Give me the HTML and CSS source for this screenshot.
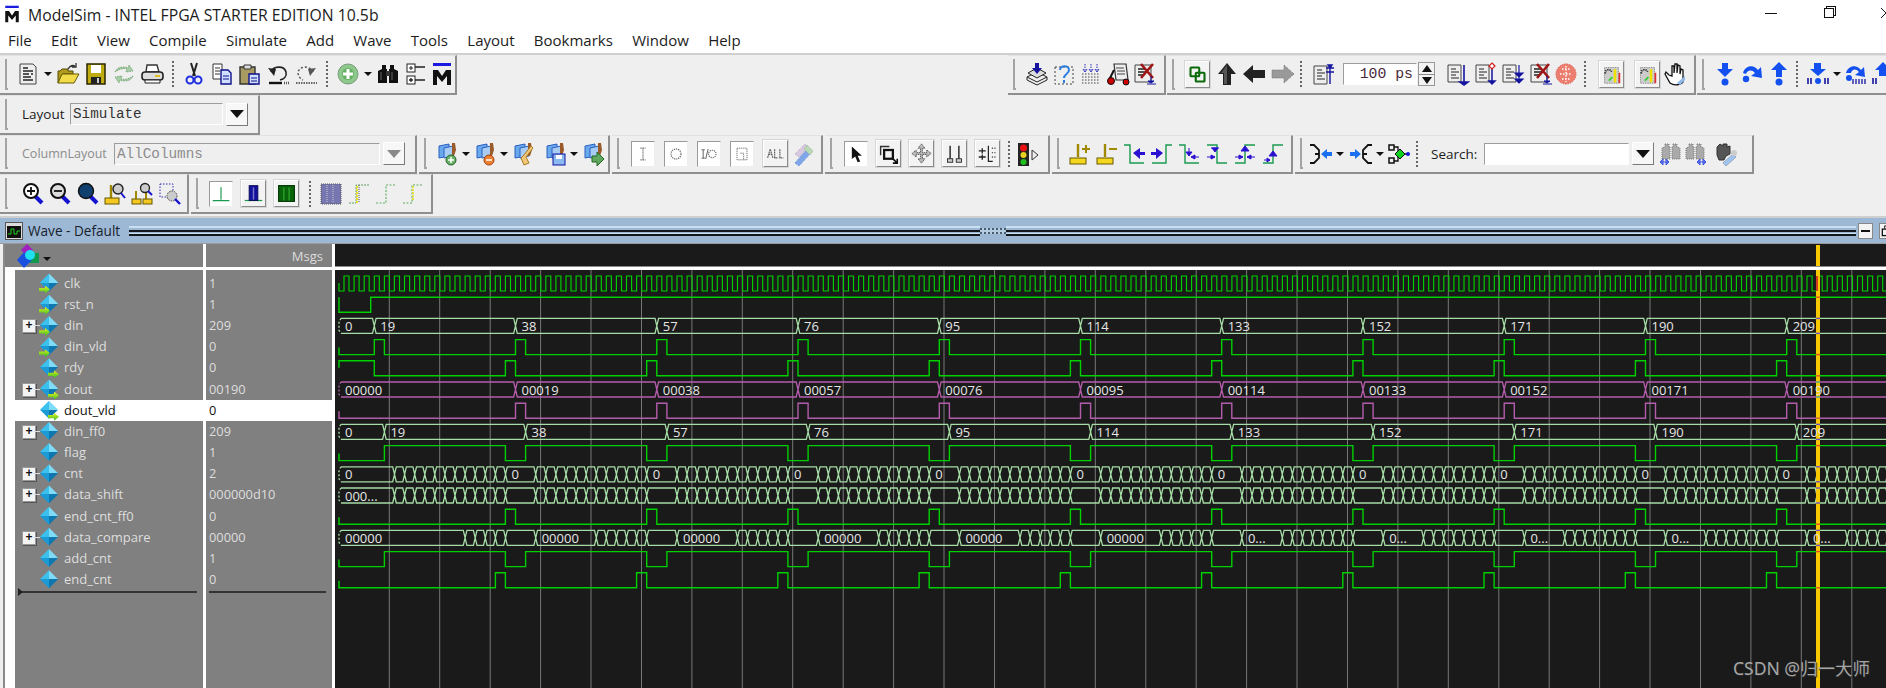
FILE: index.html
```html
<!DOCTYPE html>
<html lang="en">
<head>
<meta charset="utf-8">
<title>ModelSim - INTEL FPGA STARTER EDITION 10.5b</title>
<link rel="stylesheet" href="styles.css">
</head>
<body>
<svg class="defs" aria-hidden="true">
<symbol id="mlogo" viewBox="0 0 24 24"><path d="M3 1h18v3H3z" fill="#1a1ae0"/><path d="M3 23V8h5l4 6 4-6h5v15h-4V14l-5 6-5-6v9z" fill="#111"/></symbol>
<symbol id="doc" viewBox="0 0 24 24"><path d="M4 2h13l3 3v17H4z" fill="#eee" stroke="#444"/><path d="M7 6h5M7 9h10M7 12h6M15 12h2M7 15h8M7 18h10" stroke="#222" stroke-width="1.3"/></symbol>
<symbol id="open" viewBox="0 0 24 24"><path d="M2 21V9h2l2-2h6v2h5v3H7z" fill="#b09a20" stroke="#554c00"/><path d="M6 12h17l-5 9H2z" fill="#f2dc4a" stroke="#665a00"/><path d="M12 7c2-3 5-4 7-3M20 1v4h-4" stroke="#333" fill="none" stroke-width="1.3"/></symbol>
<symbol id="save" viewBox="0 0 24 24"><path d="M3 2h18v20H3z" fill="#c0ac10" stroke="#2a2600" stroke-width="1.5"/><rect x="7" y="3" width="10" height="8" fill="#fff"/><rect x="7" y="15" width="10" height="7" fill="#222"/><rect x="13" y="16" width="2" height="5" fill="#ccc"/></symbol>
<symbol id="comp" viewBox="0 0 24 24"><path d="M3 10c2-5 8-6 13-4l1-3 4 6-7 1 1-3c-4-1-8 0-12 3zM21 14c-2 5-8 6-13 4l-1 3-4-6 7-1-1 3c4 1 8 0 12-3z" fill="#a8cda8" stroke="#7aa87a" stroke-dasharray="1.5 1"/></symbol>
<symbol id="print" viewBox="0 0 24 24"><path d="M7 3h10l2 7H6z" fill="#fff" stroke="#333" stroke-width="1.4"/><rect x="2" y="10" width="21" height="8" rx="3" fill="#ddd" stroke="#222" stroke-width="1.6"/><path d="M5 18h15v3H5z" fill="#fff" stroke="#222"/><rect x="15" y="13" width="5" height="2" fill="#e0c020"/></symbol>
<symbol id="cut" viewBox="0 0 24 24"><path d="M9 1l4 13M15 1l-4 13" stroke="#222" stroke-width="2"/><circle cx="8" cy="18" r="3.5" fill="none" stroke="#2030e0" stroke-width="2"/><circle cx="16" cy="18" r="3.5" fill="none" stroke="#2030e0" stroke-width="2"/></symbol>
<symbol id="copy" viewBox="0 0 24 24"><path d="M3 2h9v15H3z" fill="#fff" stroke="#333"/><path d="M5 6h5M5 9h5M5 12h5" stroke="#333"/><path d="M11 8h7l3 3v11H11z" fill="#cfe0ff" stroke="#11118a" stroke-width="1.4"/><path d="M13 14h6M13 17h6" stroke="#11118a"/></symbol>
<symbol id="paste" viewBox="0 0 24 24"><path d="M2 5h15v17H2z" fill="#a89a60" stroke="#333" stroke-width="1.4"/><path d="M6 3h7v4H6z" fill="#ddd" stroke="#333"/><path d="M11 12h10v10H11z" fill="#cfe0ff" stroke="#11118a" stroke-width="1.4"/><path d="M13 16h6M13 19h6" stroke="#11118a"/></symbol>
<symbol id="undo" viewBox="0 0 24 24"><path d="M5 10c2-6 13-7 15 0 1 4-2 7-6 8" fill="none" stroke="#222" stroke-width="1.6"/><path d="M2 6l6 8 2-7z" fill="#222"/><path d="M3 21h13" stroke="#111" stroke-width="2.4"/><path d="M18 21h5" stroke="#555" stroke-width="2.4" stroke-dasharray="1 1"/></symbol>
<symbol id="redo" viewBox="0 0 24 24"><path d="M19 10c-2-6-13-7-15 0 0 3 1 6 5 8" fill="none" stroke="#555" stroke-width="1.5" stroke-dasharray="2 2"/><path d="M22 6l-6 8-2-7z" fill="#555"/><path d="M2 21h21" stroke="#666" stroke-width="2" stroke-dasharray="1.5 1"/></symbol>
<symbol id="plus" viewBox="0 0 24 24"><circle cx="12" cy="12" r="10" fill="#8dc88d" stroke="#7a9a7a"/><circle cx="12" cy="12" r="6" fill="#66b066"/><path d="M12 7v10M7 12h10" stroke="#fff" stroke-width="3"/></symbol>
<symbol id="bino" viewBox="0 0 24 24"><path d="M6 3h4v4h1v14H2V9l4-2zM14 3h4v4l4 2v12h-9V7h1z" fill="#111"/><rect x="10" y="9" width="4" height="5" fill="#333"/><path d="M5 10v8M16 10v8" stroke="#666"/></symbol>
<symbol id="tree" viewBox="0 0 24 24"><rect x="3" y="2" width="8" height="8" fill="#fff" stroke="#222"/><path d="M5 6h4M7 4v4" stroke="#222"/><rect x="3" y="14" width="8" height="8" fill="#fff" stroke="#222"/><path d="M5 18h4M7 16v4M11 5h10M11 18h10" stroke="#222" stroke-width="1.3"/></symbol>
<symbol id="load" viewBox="0 0 24 24"><path d="M2 15l10-5 10 5-10 5z" fill="#eee" stroke="#222"/><path d="M2 18l10 5 10-5M2 15v3M22 15v3" fill="none" stroke="#222"/><path d="M3 11l9-5 9 5-9 5z" fill="#ddd" stroke="#222"/><path d="M10 1h4v5h3l-5 6-5-6h3z" fill="#1414a0"/></symbol>
<symbol id="qmark" viewBox="0 0 24 24"><path d="M3 5h18v17H3z" fill="none" stroke="#444" stroke-dasharray="2 2"/><path d="M8 8c0-5 9-5 9 0 0 4-5 4-5 8M12 18v3" fill="none" stroke="#2a7de0" stroke-width="2"/></symbol>
<symbol id="dotgrid" viewBox="0 0 24 24"><path d="M3 12h18M3 15h18M3 18h18M3 21h18" stroke="#444" stroke-dasharray="1.5 1.5"/><path d="M6 2v6M12 2v6M18 2v6" stroke="#3030c0" stroke-dasharray="1.5 1"/><path d="M4 7l2 3 2-3M10 7l2 3 2-3M16 7l2 3 2-3" stroke="#3030c0" fill="none"/></symbol>
<symbol id="cart" viewBox="0 0 24 24"><path d="M8 2h12l2 16H10z" fill="#eee" stroke="#333" stroke-width="1.2"/><path d="M10 6h8M11 9h8M11 12h8" stroke="#444"/><path d="M8 8L3 18" stroke="#111" stroke-width="2"/><circle cx="5" cy="19" r="3.5" fill="#c00" stroke="#111"/><circle cx="20" cy="20" r="3" fill="#c00" stroke="#111"/></symbol>
<symbol id="xdoc" viewBox="0 0 24 24"><path d="M2 3h16v17H2z" fill="#eee" stroke="#444"/><path d="M5 7h7M5 10h10M5 13h5" stroke="#222" stroke-width="1.3"/><path d="M8 2l12 14M20 2L8 16" stroke="#a01515" stroke-width="2.6"/><path d="M18 14v6M14 22h9M15 19h6l-3 2z" stroke="#1414a0" fill="#1414a0"/></symbol>
<symbol id="link" viewBox="0 0 24 24"><rect x="4" y="4" width="10" height="10" rx="1" fill="none" stroke="#0a6a0a" stroke-width="2.4"/><rect x="10" y="10" width="10" height="10" rx="1" fill="none" stroke="#0a6a0a" stroke-width="2.4"/></symbol>
<symbol id="up" viewBox="0 0 24 24"><path d="M12 1l9 11h-5v11H8V12H3z" fill="#222"/><path d="M12 3l-6 8h3v11h3z" fill="#555"/></symbol>
<symbol id="left" viewBox="0 0 24 24"><path d="M1 12l10-9v5h12v8H11v5z" fill="#222"/></symbol>
<symbol id="right" viewBox="0 0 24 24"><path d="M23 12l-10-9v5H1v8h12v5z" fill="#999" stroke="#777" stroke-dasharray="1 1"/></symbol>
<symbol id="runtop" viewBox="0 0 24 24"><path d="M2 4h13v18H2z" fill="#eee" stroke="#444"/><path d="M5 8h5M5 11h8M5 14h5M5 17h8" stroke="#222"/><path d="M18 4v18M14 6h8M14 10h8M16 3h4l-2 3z" stroke="#1414a0" fill="#1414a0" stroke-width="1.4"/></symbol>
<symbol id="run1" viewBox="0 0 24 24"><path d="M2 3h13v17H2z" fill="#eee" stroke="#444"/><path d="M5 7h5M5 10h8M5 13h5M5 16h8" stroke="#222"/><path d="M18 3v18M14 20l4 3 4-3z" stroke="#1414a0" fill="#1414a0" stroke-width="1.6"/></symbol>
<symbol id="run2" viewBox="0 0 24 24"><path d="M2 3h13v17H2z" fill="#eee" stroke="#444"/><path d="M5 7h5M5 10h8M5 13h5M5 16h8" stroke="#222"/><path d="M18 7v14M15 19l3 3 3-3z" stroke="#1414a0" fill="#1414a0" stroke-width="1.5"/><path d="M18 1l3 3-3 3-3-3z" fill="#fff" stroke="#d02020" stroke-width="1.2"/></symbol>
<symbol id="run3" viewBox="0 0 24 24"><path d="M2 3h13v17H2z" fill="#eee" stroke="#444"/><path d="M5 7h5M5 10h8M5 13h5M5 16h8" stroke="#222"/><path d="M18 3v15M14 11l4 4 4-4zM14 17l4 4 4-4z" stroke="#1414a0" fill="#1414a0" stroke-width="1.2"/></symbol>
<symbol id="brk" viewBox="0 0 24 24"><circle cx="12" cy="12" r="10" fill="#ec7e70" stroke="#e05040" stroke-dasharray="1.5 1"/><path d="M6 12h12M12 4v16M8 7h8M8 17h8" stroke="#fff" stroke-dasharray="1.5 1.5" stroke-width="1.4"/></symbol>
<symbol id="perf" viewBox="0 0 24 24"><path d="M4 4h16v18H4z" fill="#ccc" stroke="#777" stroke-dasharray="1 1"/><path d="M5 11c-1-5 6-6 7-2" fill="none" stroke="#333" stroke-width="2" stroke-dasharray="1.5 1"/><path d="M16 6v15" stroke="#f0e000" stroke-width="3"/><path d="M21 10v12" stroke="#e03030" stroke-width="2"/><path d="M9 19l4-4" stroke="#30d030" stroke-width="2"/></symbol>
<symbol id="hand" viewBox="0 0 24 24"><path d="M6 13L3 10 2 12l5 9c4 3 11 2 13-1V8l-2-1-1 5V4l-2-1-1 8V2h-2l-1 9V4H9v10z" fill="#fff" stroke="#111" stroke-width="1.3"/><path d="M14 21l8-7v4l-5 5z" fill="#90b8e8"/></symbol>
<symbol id="stepin" viewBox="0 0 24 24"><path d="M9 1h6v6h5l-8 8-8-8h5z" fill="#1450f0"/><circle cx="12" cy="20" r="3.5" fill="#1450f0"/></symbol>
<symbol id="stepout" viewBox="0 0 24 24"><path d="M9 15h6V8h5l-8-8-8 8h5z" fill="#1450f0"/><circle cx="12" cy="20" r="3.5" fill="#1450f0"/></symbol>
<symbol id="stepover" viewBox="0 0 24 24"><path d="M3 11C5 3 14 2 18 8l3-3 1 11-11-2 4-3c-3-4-8-3-9 1z" fill="#1450f0"/><circle cx="6" cy="17" r="3.2" fill="#1450f0"/></symbol>
<symbol id="stepin2" viewBox="0 0 24 24"><path d="M8 1h7v6h5l-8 7-8-7h4z" fill="#1450f0"/><circle cx="12" cy="19" r="3" fill="#1450f0"/><path d="M2 16v6M5 16v6M19 16v6M22 16v6" stroke="#1414a0" stroke-width="1.6"/></symbol>
<symbol id="stepover2" viewBox="0 0 24 24"><path d="M2 11C4 3 13 2 17 8l3-3 1 10-10-2 4-3c-3-4-7-3-8 1z" fill="#1450f0"/><circle cx="5" cy="16" r="3" fill="#1450f0"/><path d="M9 17v5M12 17v5M15 17v5M18 17v5M21 17v5" stroke="#1414a0" stroke-width="1.3"/></symbol>
<symbol id="stepout2" viewBox="0 0 24 24"><path d="M8 14h7V8h5l-8-8-8 8h4z" fill="#1450f0"/><path d="M2 16v6M5 16v6M19 16v6M22 16v6" stroke="#1414a0" stroke-width="1.6"/></symbol>
<symbol id="wbase" viewBox="0 0 24 24"><path d="M4 4l10-2v12L4 16z" fill="#6aa8ee" stroke="#2a60c0"/><path d="M9 6l9-2v10l-9 2z" fill="#a8ccf4" stroke="#2a60c0"/><path d="M17 1h3l1 7-2 6h-2z" fill="#9a5a2a"/></symbol>
<symbol id="wadd" viewBox="0 0 24 24"><use href="#wbase"/><circle cx="16" cy="18" r="5" fill="#6ab06a" stroke="#226622"/><path d="M16 15v6M13 18h6" stroke="#fff" stroke-width="1.5"/></symbol>
<symbol id="wsub" viewBox="0 0 24 24"><use href="#wbase"/><circle cx="16" cy="18" r="5" fill="#f08030" stroke="#a04010"/><path d="M13 18h6" stroke="#fff" stroke-width="1.5"/></symbol>
<symbol id="wclean" viewBox="0 0 24 24"><use href="#wbase"/><path d="M20 4l2 2-7 9 3 6-5 2-3-7 3-3z" fill="#f0c878" stroke="#a87820"/></symbol>
<symbol id="wsave" viewBox="0 0 24 24"><use href="#wbase"/><rect x="10" y="12" width="12" height="11" fill="#8ab8f0" stroke="#1414a0"/><rect x="13" y="13" width="6" height="4" fill="#fff"/></symbol>
<symbol id="wgo" viewBox="0 0 24 24"><use href="#wbase"/><path d="M11 14h5v-4l7 7-7 7v-4h-5z" fill="#60a860" stroke="#226622"/></symbol>
<symbol id="fi" viewBox="0 0 24 24"><path d="M12 5v14M9 5h6M9 19h6" stroke="#666" stroke-width="1.4" stroke-dasharray="1.5 1"/></symbol>
<symbol id="fo" viewBox="0 0 24 24"><circle cx="12" cy="12" r="6" fill="none" stroke="#666" stroke-width="1.4" stroke-dasharray="1.5 1"/></symbol>
<symbol id="fio" viewBox="0 0 24 24"><path d="M3 7h4M5 7v10M3 17h4M8 18l3-12" stroke="#666" stroke-width="1.2"/><circle cx="16" cy="12" r="4.5" fill="none" stroke="#666" stroke-width="1.3" stroke-dasharray="1.5 1"/></symbol>
<symbol id="fb" viewBox="0 0 24 24"><path d="M6 5h12v14H6z" fill="none" stroke="#555" stroke-dasharray="1.5 1"/><path d="M10 11h4v8" fill="none" stroke="#555" stroke-dasharray="1.5 1"/></symbol>
<symbol id="fall" viewBox="0 0 24 24"><path d="M3 17l3-10 3 10M4 13h4M11 7v10h4M17 7v10h4" fill="none" stroke="#666" stroke-width="1.4" stroke-dasharray="2 .7"/></symbol>
<symbol id="wrench" viewBox="0 0 24 24"><path d="M4 21L16 7l4 4L8 24z" fill="#7ea6e8" stroke="#6a8ed8" stroke-dasharray="1 1"/><path d="M4 12L14 2l3 3L8 15z" fill="#d8c8e0" stroke="#b8a8c8" stroke-dasharray="1 1"/><path d="M16 3l6 6-3 4-6-6z" fill="#b8d8b8" stroke="#98b898" stroke-dasharray="1 1"/></symbol>
<symbol id="ptr" viewBox="0 0 24 24"><path d="M7 3v15l4-3 3 7 3-1-3-7h5z" fill="#111"/></symbol>
<symbol id="zbox" viewBox="0 0 24 24"><path d="M3 14V4h10" fill="none" stroke="#333" stroke-width="1.6"/><rect x="7" y="8" width="10" height="10" fill="none" stroke="#111" stroke-width="2.6"/><path d="M16 17l6 6M22 18v5h-5" fill="none" stroke="#111" stroke-width="1.8"/></symbol>
<symbol id="move" viewBox="0 0 24 24"><path d="M12 1l4 5h-3v5h5V8l5 4-5 4v-3h-5v5h3l-4 5-4-5h3v-5H6v3l-5-4 5-4v3h5V6H8z" fill="#bbb" stroke="#444" stroke-dasharray="1.5 .8"/></symbol>
<symbol id="pins" viewBox="0 0 24 24"><path d="M7 3v15M17 3v15" stroke="#222" stroke-width="1.6"/><rect x="4" y="18" width="6" height="4" fill="#ccc" stroke="#222"/><rect x="14" y="18" width="6" height="4" fill="#ccc" stroke="#222"/></symbol>
<symbol id="cols" viewBox="0 0 24 24"><path d="M13 3v18h5" fill="none" stroke="#222" stroke-width="1.4"/><path d="M2 9h8M6 6v6M2 16h8M6 13v6M17 6h1M20 6h1M17 11h1M20 11h1M17 16h1M20 16h1" stroke="#222" stroke-width="1.5"/></symbol>
<symbol id="traffic" viewBox="0 0 24 24"><rect x="2" y="1" width="11" height="23" fill="#222"/><circle cx="7.500" cy="6" r="3.500" fill="#e81010"/><circle cx="7.500" cy="13" r="3" fill="#e8d020"/><circle cx="7.500" cy="20" r="3" fill="#20c020"/><path d="M16 8l6 5-6 5z" fill="#eee" stroke="#333"/></symbol>
<symbol id="cadd" viewBox="0 0 24 24"><path d="M11 2v13" stroke="#a08800" stroke-width="2.4"/><rect x="3" y="16" width="16" height="6" fill="#f4d820" stroke="#665800"/><path d="M15 7h8M19 3v8" stroke="#a08800" stroke-width="2"/></symbol>
<symbol id="cdel" viewBox="0 0 24 24"><path d="M11 2v13" stroke="#a08800" stroke-width="2.4"/><rect x="3" y="16" width="16" height="6" fill="#f4d820" stroke="#665800"/><path d="M15 7h8" stroke="#a08800" stroke-width="2"/></symbol>
<symbol id="e1" viewBox="0 0 24 24"><path d="M2 3h6v18h14" fill="none" stroke="#1a9a50" stroke-width="1.4"/><path d="M11 11l7-5v4h5v3h-5v4z" fill="#2a10d0"/></symbol>
<symbol id="e2" viewBox="0 0 24 24"><path d="M22 3h-6v18H2" fill="none" stroke="#1a9a50" stroke-width="1.4"/><path d="M13 11L6 6v4H1v3h5v4z" fill="#2a10d0"/></symbol>
<symbol id="e3" viewBox="0 0 24 24"><path d="M2 3h6v18h14" fill="none" stroke="#1a9a50" stroke-width="1.4"/><path d="M12 6v5M9 10h6l-3 4zM14 15h8M14 15l4-2v4z" fill="#2a10d0" stroke="#2a10d0"/></symbol>
<symbol id="e4" viewBox="0 0 24 24"><path d="M2 3h10v18h10" fill="none" stroke="#1a9a50" stroke-width="1.4"/><path d="M6 6h8M7 6l3 4 3-4zM2 15h8M10 15l-4-2v4z" fill="#2a10d0" stroke="#2a10d0"/></symbol>
<symbol id="e5" viewBox="0 0 24 24"><path d="M2 21h10V3h10" fill="none" stroke="#1a9a50" stroke-width="1.4"/><path d="M12 4l-4 5h8zM2 15h8M10 15l-4-2v4zM14 15h8M14 15l4-2v4z" fill="#2a10d0" stroke="#2a10d0"/></symbol>
<symbol id="e6" viewBox="0 0 24 24"><path d="M2 21h10V3h10" fill="none" stroke="#1a9a50" stroke-width="1.4"/><path d="M12 9l-4 5h8zM3 18h6M9 18l-3-2v4z" fill="#2a10d0" stroke="#2a10d0"/></symbol>
<symbol id="jl" viewBox="0 0 24 24"><path d="M1 3h4l5 5v8l-5 5H1M10 12H6" fill="none" stroke="#111" stroke-width="1.8"/><path d="M12 12l6-5v3h5v4h-5v3z" fill="#1a70f0"/></symbol>
<symbol id="jr" viewBox="0 0 24 24"><path d="M23 3h-4l-5 5v8l5 5h4M14 12h4" fill="none" stroke="#111" stroke-width="1.8"/><path d="M12 12L6 7v3H1v4h5v3z" fill="#1a70f0"/></symbol>
<symbol id="node" viewBox="0 0 24 24"><path d="M2 3h5v5H2zM2 16h5v5H2z" fill="none" stroke="#111" stroke-width="1.5"/><path d="M7 5h4v14H7M17 12h3" stroke="#111" fill="none" stroke-width="1.3"/><path d="M13 7l5 5-5 5-5-5z" fill="#10d020" stroke="#111"/><circle cx="21" cy="12" r="2" fill="#1414e0"/></symbol>
<symbol id="findl" viewBox="0 0 24 24"><path d="M6 2h4v3h1v12H3V6l3-1zM14 2h4v3l3 1v11h-8V5h1z" fill="#aaa" stroke="#777" stroke-dasharray="1 1"/><path d="M1 20h9M1 20l3-3v6zM10 20l-3-3v6z" stroke="#3a50e0" fill="#7a8cf0"/></symbol>
<symbol id="findr" viewBox="0 0 24 24"><path d="M6 2h4v3h1v12H3V6l3-1zM14 2h4v3l3 1v11h-8V5h1z" fill="#aaa" stroke="#777" stroke-dasharray="1 1"/><path d="M14 20h9M14 20l3-3v6zM23 20l-3-3v6z" stroke="#3a50e0" fill="#7a8cf0"/></symbol>
<symbol id="gear" viewBox="0 0 24 24"><path d="M4 5l3-3 3 2V2h4v3l3-1v8l-4 2-2 4H6l-2-5z" fill="#555" stroke="#333"/><path d="M10 21l10-9 3 3-10 9z" fill="#a0c4f0" stroke="#98a8c0"/><circle cx="21" cy="11" r="3" fill="#ccc"/></symbol>
<symbol id="zin" viewBox="0 0 24 24"><path d="M14 14l7 7" stroke="#1414d0" stroke-width="4"/><circle cx="10" cy="9" r="7" fill="#fff" stroke="#111" stroke-width="2"/><path d="M6 9h8M10 5v8" stroke="#111" stroke-width="1.8"/></symbol>
<symbol id="zout" viewBox="0 0 24 24"><path d="M14 14l7 7" stroke="#1414d0" stroke-width="4"/><circle cx="10" cy="9" r="7" fill="#ddd" stroke="#111" stroke-width="2"/><path d="M6 9h8" stroke="#111" stroke-width="1.8"/></symbol>
<symbol id="zfull" viewBox="0 0 24 24"><path d="M14 14l7 7" stroke="#1414d0" stroke-width="4"/><circle cx="10" cy="9" r="7.500" fill="#103f70" stroke="#111" stroke-width="1.4"/></symbol>
<symbol id="zcur" viewBox="0 0 24 24"><path d="M8 3v13" stroke="#a08800" stroke-width="2.4"/><rect x="2" y="16" width="14" height="6" fill="#f4c820" stroke="#665800"/><circle cx="15" cy="7" r="5" fill="#ccc" stroke="#222" stroke-width="1.4"/><path d="M18 11l4 5" stroke="#1414d0" stroke-width="2"/></symbol>
<symbol id="zcur2" viewBox="0 0 24 24"><path d="M5 9v9M15 9v9" stroke="#a08800" stroke-width="2"/><rect x="1" y="17" width="9" height="5" fill="#f4c820" stroke="#665800"/><rect x="12" y="17" width="9" height="5" fill="#f4c820" stroke="#665800"/><circle cx="14" cy="6" r="4.500" fill="#ccc" stroke="#222" stroke-width="1.3"/><path d="M17 9l4 4" stroke="#1414d0" stroke-width="2"/></symbol>
<symbol id="zsel" viewBox="0 0 24 24"><path d="M2 2h13v13H2z" fill="none" stroke="#2a2ab0" stroke-dasharray="1.5 1.500"/><circle cx="14" cy="14" r="5" fill="#ccc" stroke="#444" stroke-dasharray="1.5 1"/><path d="M17 17l5 5" stroke="#1414d0" stroke-width="2.4"/></symbol>
<symbol id="w1" viewBox="0 0 24 24"><path d="M12 4v15M2 20h20" stroke="#1a9a50" stroke-width="1.4"/></symbol>
<symbol id="w2" viewBox="0 0 24 24"><path d="M2 20h20" stroke="#1a9a50" stroke-width="1.4"/><rect x="7" y="3" width="10" height="17" fill="#12129a" stroke="#0a0a50"/><path d="M12 5v14" stroke="#7a7ad0" stroke-width="1.6"/></symbol>
<symbol id="w3" viewBox="0 0 24 24"><rect x="3" y="3" width="18" height="18" fill="#0a640a" stroke="#063a06" stroke-width="1.4"/><path d="M9 5v15M15 5v15" stroke="#30b030" stroke-width="1.3"/></symbol>
<symbol id="w4" viewBox="0 0 24 24"><rect x="2" y="2" width="20" height="20" fill="#7676b0" stroke="#555" stroke-dasharray="1 1"/><path d="M8 3v18M14 3v18" stroke="#ccc" stroke-dasharray="1 1"/></symbol>
<symbol id="w5" viewBox="0 0 24 24"><path d="M2 21h7V3h13" fill="none" stroke="#60a060" stroke-dasharray="2 1"/><path d="M10 4v17" stroke="#e8e020" stroke-width="2" stroke-dasharray="2 1"/><path d="M12 3v18" stroke="#555" stroke-dasharray="1 1"/></symbol>
<symbol id="w6" viewBox="0 0 24 24"><path d="M2 21h10V3h10" fill="none" stroke="#60b060" stroke-width="1.2" stroke-dasharray="2 1.500"/></symbol>
<symbol id="w7" viewBox="0 0 24 24"><path d="M2 21h9V3h11" fill="none" stroke="#60b060" stroke-width="1.2" stroke-dasharray="2 1.500"/><path d="M12 4v15" stroke="#e8e020" stroke-width="1.6" stroke-dasharray="2 1"/></symbol>
<symbol id="hdr" viewBox="0 0 24 24"><path d="M10 0l6 6-6 6-6-6z" fill="#a020c0"/><rect x="12" y="9" width="10" height="10" fill="#109a50"/><path d="M7 8l8 8-8 8-7-8z" fill="#1a50e0"/><circle cx="13" cy="11" r="5" fill="#20e0f0"/></symbol>
<symbol id="wavewin" viewBox="0 0 18 18"><rect x=".5" y=".5" width="17" height="17" fill="#ddd" stroke="#555"/><rect x="2" y="4" width="14" height="12" fill="#111"/><path d="M3 12h3V7h3v5h3V9h3" fill="none" stroke="#20d020"/></symbol>
<symbol id="winfloat" viewBox="0 0 14 14"><rect x="2.500" y="5.500" width="9" height="7" fill="none" stroke="#111" stroke-width="1.4"/><path d="M5 5V2h5v3" fill="none" stroke="#111"/></symbol>
</svg>

<header class="titlebar">
  <svg class="applogo"><use href="#mlogo"/></svg>
  <span class="apptitle">ModelSim - INTEL FPGA STARTER EDITION 10.5b</span>
  <div class="winctl">
    <span class="wmin"></span>
    <span class="wmax"></span>
    <span class="wclose"></span>
  </div>
</header>
<nav class="menubar">
  <span>File</span><span>Edit</span><span>View</span><span>Compile</span><span>Simulate</span><span>Add</span><span>Wave</span><span>Tools</span><span>Layout</span><span>Bookmarks</span><span>Window</span><span>Help</span>
</nav>

<section class="toolbars">
  <div class="tbrow">
    <div class="grp g-file"><i class="grip"></i>
      <svg class="ic"><use href="#doc"/></svg><i class="dd"></i>
      <svg class="ic"><use href="#open"/></svg>
      <svg class="ic"><use href="#save"/></svg>
      <svg class="ic"><use href="#comp"/></svg>
      <svg class="ic"><use href="#print"/></svg><i class="sep"></i>
      <svg class="ic"><use href="#cut"/></svg>
      <svg class="ic"><use href="#copy"/></svg>
      <svg class="ic"><use href="#paste"/></svg>
      <svg class="ic"><use href="#undo"/></svg>
      <svg class="ic"><use href="#redo"/></svg><i class="sep"></i>
      <svg class="ic"><use href="#plus"/></svg><i class="dd"></i>
      <svg class="ic"><use href="#bino"/></svg>
      <svg class="ic"><use href="#tree"/></svg>
      <svg class="ic mln2"><use href="#mlogo"/></svg>
    </div>
    <div class="grp g-load"><i class="grip"></i>
      <svg class="ic"><use href="#load"/></svg>
      <svg class="ic"><use href="#qmark"/></svg>
      <svg class="ic"><use href="#dotgrid"/></svg>
      <svg class="ic"><use href="#cart"/></svg>
      <svg class="ic"><use href="#xdoc"/></svg>
    </div>
    <div class="grp g-run"><i class="grip"></i>
      <svg class="ic btn"><use href="#link"/></svg>
      <svg class="ic ml2"><use href="#up"/></svg>
      <svg class="ic"><use href="#left"/></svg>
      <svg class="ic ml2"><use href="#right"/></svg><i class="sep ml2"></i>
      <svg class="ic ml2"><use href="#runtop"/></svg>
      <span class="field num ml4">100 ps</span>
      <span class="spin"><i></i><i></i></span>
      <svg class="ic ml8"><use href="#run1"/></svg>
      <svg class="ic ml1"><use href="#run2"/></svg>
      <svg class="ic"><use href="#run3"/></svg>
      <svg class="ic ml1"><use href="#xdoc"/></svg>
      <svg class="ic mln2"><use href="#brk"/></svg><i class="sep ml3"></i>
      <svg class="ic btn ml5"><use href="#perf"/></svg>
      <svg class="ic btn ml8"><use href="#perf"/></svg>
      <svg class="ic"><use href="#hand"/></svg>
    </div>
    <div class="grp g-step"><i class="grip"></i>
      <svg class="ic"><use href="#stepin"/></svg>
      <svg class="ic"><use href="#stepover"/></svg>
      <svg class="ic"><use href="#stepout"/></svg><i class="sep ml2"></i>
      <svg class="ic"><use href="#stepin2"/></svg><i class="dd"></i>
      <svg class="ic"><use href="#stepover2"/></svg>
      <svg class="ic"><use href="#stepout2"/></svg>
    </div>
  </div>

  <div class="tbrow">
    <div class="grp g-layout"><i class="grip"></i>
      <span class="lbl w-lbl">Layout</span>
      <span class="field mono w-layout">Simulate</span>
      <span class="combo"><i></i></span>
    </div>
  </div>

  <div class="tbrow">
    <div class="grp g-column"><i class="grip"></i>
      <span class="lbl dim">ColumnLayout</span>
      <span class="field mono dimf w-column">AllColumns</span>
      <span class="combo off"><i></i></span>
    </div>
    <div class="grp g-win"><i class="grip"></i>
      <svg class="ic"><use href="#wadd"/></svg><i class="dd"></i>
      <svg class="ic"><use href="#wsub"/></svg><i class="dd"></i>
      <svg class="ic"><use href="#wclean"/></svg>
      <svg class="ic ml5"><use href="#wsave"/></svg><i class="dd"></i>
      <svg class="ic"><use href="#wgo"/></svg>
    </div>
    <div class="grp g-filter"><i class="grip"></i>
      <svg class="ic sunk"><use href="#fi"/></svg>
      <svg class="ic sunk"><use href="#fo"/></svg>
      <svg class="ic sunk"><use href="#fio"/></svg>
      <svg class="ic sunk"><use href="#fb"/></svg>
      <svg class="ic btn"><use href="#fall"/></svg>
      <svg class="ic mln6"><use href="#wrench"/></svg>
    </div>
    <div class="grp g-tool"><i class="grip"></i>
      <svg class="ic sunk"><use href="#ptr"/></svg>
      <svg class="ic btn"><use href="#zbox"/></svg>
      <svg class="ic btn"><use href="#move"/></svg>
      <svg class="ic btn"><use href="#pins"/></svg>
      <svg class="ic btn"><use href="#cols"/></svg><i class="sep"></i>
      <svg class="ic mln2"><use href="#traffic"/></svg>
    </div>
    <div class="grp g-edge"><i class="grip"></i>
      <svg class="ic"><use href="#cadd"/></svg>
      <svg class="ic"><use href="#cdel"/></svg>
      <svg class="ic"><use href="#e1"/></svg>
      <svg class="ic"><use href="#e2"/></svg>
      <svg class="ic"><use href="#e3"/></svg>
      <svg class="ic"><use href="#e4"/></svg>
      <svg class="ic"><use href="#e5"/></svg>
      <svg class="ic"><use href="#e6"/></svg>
    </div>
    <div class="grp g-search"><i class="grip"></i>
      <svg class="ic"><use href="#jl"/></svg><i class="dd"></i>
      <svg class="ic ml2"><use href="#jr"/></svg><i class="dd"></i>
      <svg class="ic"><use href="#node"/></svg><i class="sep ml2"></i>
      <span class="lbl ml5 s-lbl">Search:</span>
      <span class="field w-search ml4"></span>
      <span class="combo"><i></i></span>
      <svg class="ic ml2"><use href="#findl"/></svg>
      <svg class="ic mln3"><use href="#findr"/></svg>
      <svg class="ic ml3"><use href="#gear"/></svg>
    </div>
  </div>

  <div class="tbrow">
    <div class="grp g-zoom"><i class="grip"></i>
      <svg class="ic"><use href="#zin"/></svg>
      <svg class="ic"><use href="#zout"/></svg>
      <svg class="ic"><use href="#zfull"/></svg>
      <svg class="ic"><use href="#zcur"/></svg>
      <svg class="ic"><use href="#zcur2"/></svg>
      <svg class="ic"><use href="#zsel"/></svg>
    </div>
    <div class="grp g-wfmt"><i class="grip"></i>
      <svg class="ic sunk"><use href="#w1"/></svg>
      <svg class="ic btn"><use href="#w2"/></svg>
      <svg class="ic btn"><use href="#w3"/></svg><i class="sep ml2"></i>
      <svg class="ic"><use href="#w4"/></svg>
      <svg class="ic mln4"><use href="#w5"/></svg>
      <svg class="ic mln5"><use href="#w6"/></svg>
      <svg class="ic mln5"><use href="#w7"/></svg>
    </div>
  </div>
</section>

<main class="wavewin">
  <div class="wintitle">
    <svg class="winicon"><use href="#wavewin"/></svg>
    <span class="wintext">Wave - Default</span>
    <span class="ridge"></span>
    <span class="handle"></span>
    <span class="ridge"></span>
    <span class="winbtn"><i class="bar"></i></span>
    <span class="winbtn"><svg class="fl"><use href="#winfloat"/></svg></span>
  </div>
  <div class="panes">
    <div class="pane names">
      <div class="phead"><svg class="hdricon"><use href="#hdr"/></svg><i class="dd"></i></div>
      <div class="pbody">
        <div class="row"><span class="gut"></span><span class="sg in"></span><span class="nm">clk</span></div>
        <div class="row"><span class="gut"></span><span class="sg in"></span><span class="nm">rst_n</span></div>
        <div class="row"><span class="gut x"></span><span class="sg in"></span><span class="nm">din</span></div>
        <div class="row"><span class="gut"></span><span class="sg in"></span><span class="nm">din_vld</span></div>
        <div class="row"><span class="gut"></span><span class="sg out"></span><span class="nm">rdy</span></div>
        <div class="row"><span class="gut x"></span><span class="sg out"></span><span class="nm">dout</span></div>
        <div class="row sel"><span class="gut"></span><span class="sg out"></span><span class="nm">dout_vld</span></div>
        <div class="row"><span class="gut x"></span><span class="sg"></span><span class="nm">din_ff0</span></div>
        <div class="row"><span class="gut"></span><span class="sg"></span><span class="nm">flag</span></div>
        <div class="row"><span class="gut x"></span><span class="sg"></span><span class="nm">cnt</span></div>
        <div class="row"><span class="gut x"></span><span class="sg"></span><span class="nm">data_shift</span></div>
        <div class="row"><span class="gut"></span><span class="sg"></span><span class="nm">end_cnt_ff0</span></div>
        <div class="row"><span class="gut x"></span><span class="sg"></span><span class="nm">data_compare</span></div>
        <div class="row"><span class="gut"></span><span class="sg"></span><span class="nm">add_cnt</span></div>
        <div class="row"><span class="gut"></span><span class="sg"></span><span class="nm">end_cnt</span></div>
        <div class="endline first"></div>
      </div>
    </div>
    <div class="pane values">
      <div class="phead right">Msgs</div>
      <div class="pbody">
        <div class="row val">1</div><div class="row val">1</div><div class="row val">209</div><div class="row val">0</div><div class="row val">0</div><div class="row val">00190</div><div class="row val sel">0</div><div class="row val">209</div><div class="row val">1</div><div class="row val">2</div><div class="row val">000000d10</div><div class="row val">0</div><div class="row val">00000</div><div class="row val">1</div><div class="row val">0</div>
        <div class="endline"></div>
      </div>
    </div>
    <div id="waves" class="waves"></div>
  </div>
  <div class="mark">CSDN @归一大师</div>
</main>
<script src="wave.js"></script>
</body>
</html>
```
FILE: styles.css
```css
* { box-sizing: border-box; }
html, body { margin: 0; height: 688px; overflow: hidden; background: #fff; }
body { width: 1886px; font-family: "Open Sans", "Noto Sans", sans-serif; color: #1c1c1c; }
i { display: block; }
.defs { position: absolute; width: 0; height: 0; }

.titlebar { height: 26px; display: flex; align-items: center; padding-left: 3px; }
.applogo { width: 18px; height: 20px; margin-top: 2px; }
.apptitle { margin-left: 7px; font-size: 15.75px; white-space: nowrap; margin-top: 3px; }
.winctl { margin-left: auto; display: flex; align-items: center; height: 26px; }
.wmin { width: 12px; height: 1px; background: #111; margin-right: 47px; }
.wmax { width: 10px; height: 10px; border: 1px solid #111; margin-right: 47px; box-shadow: 2px -2px 0 -1px #fff, 2px -2px 0 0 #111; }
.wclose { width: 10px; height: 10px; margin-right: -5px; background: linear-gradient(45deg, transparent 47%, #111 47%, #111 53%, transparent 53%), linear-gradient(-45deg, transparent 47%, #111 47%, #111 53%, transparent 53%); }

.menubar { height: 27px; display: flex; align-items: center; gap: 19.3px; padding-left: 8px; font-size: 15px; white-space: nowrap; }

.toolbars { height: 163px; background: #efefef; border-top: 2px solid #cfcfcf; display: flex; flex-direction: column; overflow: hidden; }
.tbrow { height: 39.75px; display: flex; flex: none; width: 1886px; }
.grp { display: flex; align-items: center; gap: 3px; flex: none; height: 100%; border-right: 2px solid #8f8f8f; border-bottom: 2px solid #8f8f8f; border-top: 1px solid #e2e2e2; font-size: 13.5px; }
.grip { width: 3px; height: 31px; margin-left: 5px; flex: none; border-left: 2px solid #a4a4a4; border-bottom: 2px solid #a4a4a4; margin-right: var(--pl, 4px); }
.ic { width: 24px; height: 24px; flex: none; }
.btn { width: 25px; height: 27px; padding: 1px; background: #f3f3f3; border: 1px solid; border-color: #fff #8a8a8a #8a8a8a #fff; box-shadow: 0 0 0 1px #d6d6d6; }
.sunk { width: 24px; height: 26px; background: #fff; border: 1px solid; border-color: #9a9a9a #eee #eee #9a9a9a; padding: 1px; }
.dd { width: 0; height: 0; border: 4px solid transparent; border-top: 4px solid #111; border-bottom-width: 0; flex: none; }
.sep { width: 1px; height: 26px; flex: none; border-left: 2px dotted #666; margin: 0 var(--sm, 4px); }
.ml1 { margin-left: 1px; } .ml2 { margin-left: 2px; } .ml3 { margin-left: 3px; } .ml4 { margin-left: 4px; } .ml5 { margin-left: 5px; } .ml6 { margin-left: 6px; } .ml8 { margin-left: 8px; }
.mln2 { margin-left: -2px; } .mln3 { margin-left: -3px; } .mln4 { margin-left: -4px; } .mln5 { margin-left: -5px; } .mln6 { margin-left: -6px; }

.g-file { width: 457px; gap: 4px; --pl: 4px; }
.g-load { width: 158px; margin-left: 551px; --pl: 6px; }
.g-run { width: 529px; margin-left: 1px; --pl: 7px; --sm: 5px; }
.g-step { width: 260px; margin-left: 1px; --pl: 5px; --sm: 5px; border-right: 0; }
.g-layout { width: 260px; --pl: 11px; }
.g-column { width: 417px; --pl: 11px; }
.g-win { width: 191px; margin-left: 2px; --pl: 5px; }
.g-filter { width: 211px; margin-left: 2px; gap: 9px; --pl: 2px; }
.g-tool { width: 225px; margin-left: 2px; gap: 8px; --pl: 3px; --sm: 0; }
.g-edge { width: 241px; margin-left: 2px; gap: 3.7px; --pl: 3px; }
.g-search { width: 459px; margin-left: 2px; --pl: 3px; --sm: 5px; }
.g-zoom { width: 189px; gap: 3.5px; --pl: 9px; }
.g-wfmt { width: 242px; margin-left: 2px; gap: 8px; --pl: 2px; --sm: 0; }

.lbl { font-size: 13.5px; white-space: nowrap; color: #1c1c1c; flex: none; }
.w-lbl { width: 42px; }
.s-lbl { width: 46px; }
.lbl.dim { color: #8c8c8c; width: 85px; font-size: 12.5px; }
.field { height: 22px; flex: none; background: #fff; border: 1px solid; border-color: #9c9c9c #fff #fff #9c9c9c; display: flex; align-items: center; }
.mono { font-family: "Liberation Mono", monospace; font-size: 14.3px; padding-left: 2px; background: #efefef; color: #333; }
.dimf { color: #8c8c8c; }
.w-layout { width: 153px; margin-left: 3px; }
.w-column { width: 266px; margin-left: 4px; }
.w-search { width: 145px; }
.num { font-family: "Liberation Mono", monospace; font-size: 14.8px; width: 74px; justify-content: flex-end; padding-right: 3px; color: #4a2a3a; }
.spin { width: 17px; height: 24px; margin-left: -2px; flex: none; display: flex; flex-direction: column; border: 1px solid #9a9a9a; background: #f3f3f3; }
.spin i { flex: 1; display: flex; align-items: center; justify-content: center; }
.spin i::after { content: ""; border: 5px solid transparent; border-top: 0; border-bottom: 7px solid #111; }
.spin i + i { border-top: 1px solid #888; }
.spin i + i::after { border-bottom: 0; border-top: 7px solid #111; }
.combo { width: 22px; height: 23px; flex: none; background: #f7f7f7; border: 1px solid; border-color: #fff #7a7a7a #7a7a7a #fff; display: flex; align-items: center; justify-content: center; }
.combo i { border: 7px solid transparent; border-top: 8px solid #111; border-bottom: 0; }
.combo.off i { border-top-color: #8a8a8a; }

.wavewin { position: relative; height: 472px; border-top: 2px solid #cfcfcf; }
.wintitle { height: 25px; background: #9db8d4; display: flex; align-items: center; padding-left: 5px; }
.winicon { width: 18px; height: 18px; flex: none; }
.wintext { margin-left: 5px; margin-right: 9px; font-size: 13.6px; color: #18222e; white-space: nowrap; }
.ridge { flex: 1; height: 10px; border-top: 2px solid #c8e0f0; border-bottom: 2px solid #14181c; position: relative; }
.ridge::after { content: ""; position: absolute; left: 0; right: 0; top: 2px; height: 2px; background: #14181c; }
.ridge::before { content: ""; position: absolute; left: 0; right: 0; top: 5px; height: 1px; background: #c8e0f0; }
.handle { width: 26px; height: 6px; flex: none; border-top: 2px dotted #465a70; border-bottom: 2px dotted #465a70; background: #b4cce0; }
.winbtn { flex: none; width: 15px; height: 16px; margin-left: 2px; background: #f4f4f4; border: 1px solid #888; display: flex; align-items: center; justify-content: center; }
.winbtn:last-child { margin-left: 6px; margin-right: -8px; width: 15px; }
.bar { width: 9px; height: 2px; background: #111; }
.fl { width: 13px; height: 13px; }

.panes { display: flex; height: 445px; border-top: 1px solid #9a9a9a; background: #fff; }
.pane { flex: none; display: flex; flex-direction: column; }
.names { width: 206px; padding-left: 5px; padding-right: 3px; background: linear-gradient(90deg, #efefef 3px, #8a8a8a 3px, #8a8a8a 5px, #ffffff 5px, #fff); }
.values { width: 126px; }
.waves { flex: none; width: 1551px; margin-left: 3px; background: #1a1a1a; }
.waves svg { display: block; }
.phead { height: 23px; flex: none; background: #808080; color: #dcdcdc; font-size: 13px; display: flex; align-items: center; }
.phead.right { justify-content: flex-end; padding-right: 9px; }
.hdricon { width: 24px; height: 24px; margin-left: 12px; }
.phead .dd { margin-left: 2px; margin-top: 6px; }
.pbody { flex: 1; margin-top: 3px; padding-top: 3px; background: #808080; min-height: 0; overflow: hidden; }
.names .pbody { margin-left: 10px; }
.row { height: 21.2px; display: flex; align-items: center; padding-bottom: 2px; font-size: 13px; color: #dedede; white-space: nowrap; }
.row.sel { background: #fff; color: #111; }
.val { padding-left: 3px; font-size: 12.8px; }
.gut { width: 25px; height: 12px; flex: none; position: relative; }
.gut.x::before { content: "+"; position: absolute; left: 7px; top: 0; width: 12px; height: 12px; background: #f4f4f4; border: 1px solid #999; box-shadow: 1px 1px 0 #555; color: #111; font: bold 12px/10px "Liberation Sans", sans-serif; text-align: center; }
.gut.x::after { content: ""; position: absolute; left: 19px; top: 6px; width: 6px; height: 1px; background: #ddd; }
.sg { width: 18px; height: 18px; flex: none; position: relative; margin-right: 6px; }
.sg::before { content: ""; position: absolute; inset: 0; background: conic-gradient(from 0deg at 50% 50%, #7fdcf8 0 25%, #0f77b0 25% 50%, #1b9ad6 50% 75%, #3cc0ee 75% 100%); clip-path: polygon(50% 0, 100% 50%, 50% 100%, 0 50%); }
.sg.in::after, .sg.out::after { content: ""; position: absolute; bottom: -2px; width: 11px; height: 8px; background: linear-gradient(#e8f020, #30c020); clip-path: polygon(0 30%, 55% 30%, 55% 0, 100% 50%, 55% 100%, 55% 70%, 0 70%); }
.sg.in::after { left: -1px; }
.sg.out::after { right: -1px; }
.nm { display: block; }
.endline { height: 2px; background: #333; margin: 0 6px 0 3px; }
.endline.first { position: relative; }
.endline.first::before { content: ""; position: absolute; left: 0; top: -3px; border: 4px solid transparent; border-left: 5px solid #222; border-right: 0; }

.mark { position: absolute; left: 1733px; top: 437px; font-family: "Noto Sans", "Noto Sans CJK SC", sans-serif; font-size: 17.5px; color: #a6a6a6; text-shadow: 1px 1px 1px #2a2a2a; white-space: nowrap; }
```
FILE: wave.js
```js
(function () {
  var NS = 'http://www.w3.org/2000/svg';
  var X0 = 339, XMAX = 1900, P = 141.24, C = 10.09, PITCH = 21.2, TOP = 276, AMP = 15;
  var GREEN = '#00d000', BUS = '#a6dca6', MAG = '#b45cac';
  function e(k) { return 374.3 + P * k; }
  function hi(i) { return TOP + PITCH * i; }
  function lo(i) { return hi(i) + AMP; }
  function f(n) { return n.toFixed(1); }

  var svg = document.createElementNS(NS, 'svg');
  svg.setAttribute('width', 1551);
  svg.setAttribute('height', 444);
  svg.setAttribute('viewBox', '335 244 1551 444');

  function add(tag, attrs, text) {
    var el = document.createElementNS(NS, tag);
    for (var a in attrs) el.setAttribute(a, attrs[a]);
    if (text) el.textContent = text;
    svg.appendChild(el);
    return el;
  }

  // header rule and time grid
  add('rect', { x: 335, y: 266, width: 1551, height: 1, fill: '#8a8a8a' });
  add('rect', { x: 335, y: 267, width: 1551, height: 3, fill: '#ffffff' });
  for (var g = 0; g < 30; g++) {
    var gx = 389.3 + 50.43 * g;
    add('path', { d: 'M' + f(gx) + ' 270V688', stroke: '#777', 'stroke-width': 1, fill: 'none' });
  }

  // single-bit traces: edges toggle the level
  function trace(i, startHigh, edges, color, stub, width) {
    var y = startHigh ? hi(i) : lo(i);
    var s = startHigh ? hi(i) + stub : lo(i) - stub;
    var d = 'M' + X0 + ' ' + f(s) + 'V' + f(y);
    edges.forEach(function (x) {
      if (x > XMAX) return;
      y = (y === hi(i)) ? lo(i) : hi(i);
      d += 'H' + f(x) + 'V' + f(y);
    });
    d += 'H' + XMAX;
    add('path', { d: d, fill: 'none', stroke: color || GREEN, 'stroke-width': width || 1.4 });
  }

  // bus traces: hexagon cells with a dashed opening bracket
  var labels = [];
  function bus(i, bounds, texts, color) {
    var h = hi(i), l = lo(i), m = (h + l) / 2, k = 1.8, d = '';
    for (var n = 0; n < bounds.length - 1; n++) {
      var a = bounds[n], b = bounds[n + 1];
      if (a > XMAX) break;
      d += 'M' + f(a + (n ? 0 : 2)) + ' ' + f(n ? m : h);
      if (n) d += 'L' + f(a + k) + ' ' + f(h);
      d += 'H' + f(b - k) + 'L' + f(b) + ' ' + f(m) + 'L' + f(b - k) + ' ' + f(l) + 'H' + f(a + (n ? k : 2));
      if (n) d += 'L' + f(a) + ' ' + f(m);
      if (texts[n]) labels.push({ x: a + 6, y: m + 5, t: texts[n] });
    }
    add('path', { d: d, fill: 'none', stroke: color, 'stroke-width': 1.3 });
    add('path', { d: 'M' + (X0 + 2) + ' ' + f(h) + 'L' + X0 + ' ' + f(h + 3) + 'V' + f(l - 3) + 'L' + (X0 + 2) + ' ' + f(l), fill: 'none', stroke: color, 'stroke-width': 1.3, 'stroke-dasharray': '2 2' });
  }

  function range(a, b) { var r = []; for (var k = a; k <= b; k++) r.push(k); return r; }
  function pad5(n) { return ('00000' + n).slice(-5); }
  var K1 = range(1, 10);
  function pulses(offA, offB, ks) {
    var r = [];
    ks.forEach(function (k) { r.push(e(k) + offA, e(k) + offB); });
    return r;
  }
  var dinLabels = ['0'].concat(range(1, 11).map(function (k) { return String(19 * k); }));

  // 0 clk
  var clk = [];
  for (var x = 344; x < XMAX; x += C) clk.push(x, x + C / 2);
  trace(0, false, clk, GREEN, 8, 1.15);
  // 1 rst_n
  trace(1, false, [370.7], GREEN, 15);
  // 2 din
  bus(2, [X0].concat(range(0, 10).map(e), [2000]), dinLabels, BUS);
  // 3 din_vld
  trace(3, false, pulses(0, C, range(0, 10)), GREEN, 7);
  // 4 rdy
  trace(4, true, [e(0)].concat(pulses(-C, 0, K1)), GREEN, 7);
  // 5 dout
  bus(5, [X0].concat(K1.map(e), [2000]), range(0, 10).map(function (k) { return pad5(19 * k); }), MAG);
  // 6 dout_vld
  trace(6, false, pulses(0, C, K1), MAG, 7);
  // 7 din_ff0
  bus(7, [X0].concat(range(0, 10).map(function (k) { return e(k) + C; }), [2000]), dinLabels, BUS);
  // 8 flag, 13 add_cnt
  var flagEdges = [e(0) + C].concat(pulses(-C, C, K1));
  trace(8, false, flagEdges, GREEN, 7);
  trace(13, false, flagEdges, GREEN, 7);

  // counter-like buses
  function cells(firstLabel, zeroLabel) {
    var b = [X0], t = [firstLabel];
    range(0, 11).forEach(function (k) {
      var base = e(k) + 2 * C;
      for (var n = 0; n <= 11; n++) {
        b.push(base + C * n);
        t.push(n === 11 ? zeroLabel : '');
      }
    });
    b.push(2400);
    return { b: b, t: t };
  }
  var c1 = cells('0', '0');
  bus(9, c1.b, c1.t, BUS);
  var c2 = cells('000...', '');
  bus(10, c2.b, c2.t, BUS);

  // 11 end_cnt_ff0, 14 end_cnt
  trace(11, false, pulses(-C, 0, K1), GREEN, 7);
  trace(14, false, pulses(-2 * C, -C, K1), GREEN, 7);

  // 12 data_compare
  var db = [X0], dt = ['00000'];
  range(0, 11).forEach(function (k) {
    var base = e(k) + 2 * C;
    var w = k <= 5 ? 6 : 4;
    if (k === 0) {
      for (var n = 7; n <= 11; n++) { db.push(base + C * n); dt.push(''); }
    } else {
      db.push(base);
      dt.push(k <= 5 ? '00000' : '0...');
      for (var m = w; m <= 11; m++) { db.push(base + C * m); dt.push(''); }
    }
  });
  db.push(2400);
  bus(12, db, dt, BUS);

  // cursor, then the blended crossings, then the labels on top
  add('rect', { x: 1816, y: 245, width: 4, height: 21, fill: '#f8c800' });
  add('rect', { x: 1816, y: 270, width: 4, height: 418, fill: '#f8c800' });
  add('rect', { x: 1816, y: 276, width: 2, height: 15, fill: '#d04020' });
  var marks = [
    [hi(1), '#e05020'], [lo(3), '#e05020'], [lo(4), '#e05020'], [lo(6), '#c06040'],
    [hi(8), '#e05020'], [lo(11), '#e05020'], [hi(13), '#e05020'], [lo(14), '#e05020'],
    [hi(2), '#6a50c0'], [lo(2), '#6a50c0'], [hi(5), '#40a0a0'], [lo(5), '#40a0a0'],
    [hi(7), '#6a50c0'], [lo(7), '#6a50c0'], [hi(9), '#6a50c0'], [lo(9), '#6a50c0'],
    [hi(10), '#6a50c0'], [lo(10), '#6a50c0'], [hi(12), '#6a50c0'], [lo(12), '#6a50c0']
  ];
  marks.forEach(function (mk) {
    add('rect', { x: 1816, y: f(mk[0] - 0.7), width: 4, height: 1.4, fill: mk[1] });
  });
  labels.forEach(function (l) {
    add('text', { x: f(l.x), y: f(l.y), 'font-family': '"Open Sans", sans-serif', 'font-size': 13, fill: '#e6e6e6' }, l.t);
  });

  document.getElementById('waves').appendChild(svg);
})();
```
